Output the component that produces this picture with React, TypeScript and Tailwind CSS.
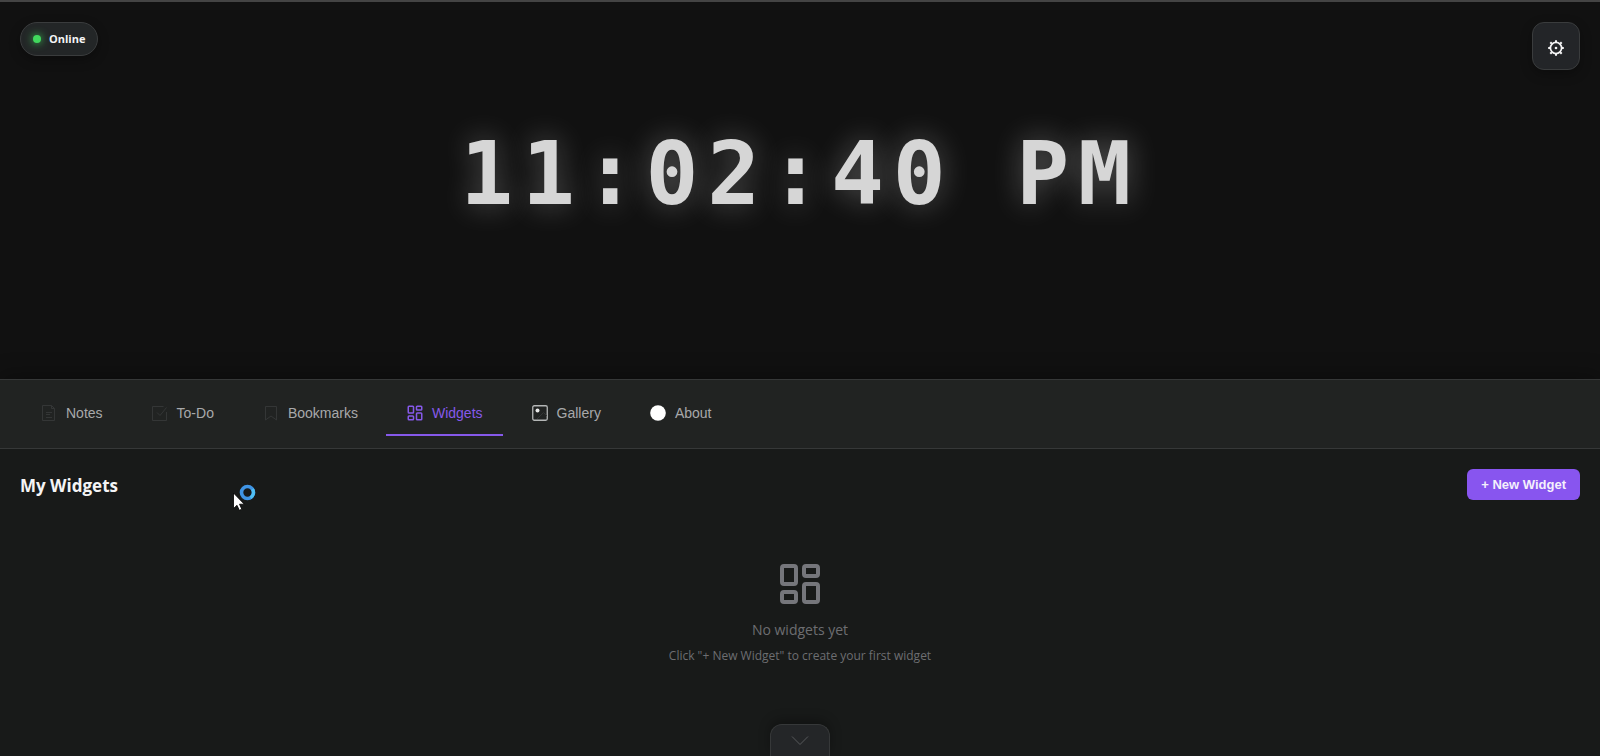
import { useState } from "react";
import type { ReactNode } from "react";
import { LayoutDashboard } from "lucide-react";

const NotesIcon = () => (
  <svg width="16" height="16" viewBox="0 0 16 16" fill="none" stroke="#343636" aria-hidden="true">
    <path d="M1.500 .5h9l3 3v12h-12zM10.500 .5v3h3M5 7.500h6M5 9.500h4M5 12.500h6" />
  </svg>
);

const TodoIcon = () => (
  <svg width="16" height="16" viewBox="0 0 16 16" fill="none" stroke="#343636" aria-hidden="true">
    <path d="M14.500 7v8.500h-14v-14h11M5 7.500l3 3 6.500-8" />
  </svg>
);

const BookmarkIcon = () => (
  <svg width="16" height="16" viewBox="0 0 16 16" fill="none" stroke="#343636" aria-hidden="true">
    <path d="M2.500 1.500h11v13.500l-5.500-4-5.500 4z" />
  </svg>
);

const GalleryIcon = () => (
  <svg width="16" height="16" viewBox="0 0 16 16" fill="none" aria-hidden="true">
    <rect x=".75" y=".75" width="14.500" height="14.500" rx="1.500" stroke="#b4b6b6" strokeWidth="1.300" />
    <circle cx="5.500" cy="5.500" r="2" fill="#e8e8e8" />
    <path d="M5 14l6.500-6.500L15 11" stroke="#343636" />
  </svg>
);

const AboutIcon = () => (
  <svg width="16" height="16" viewBox="0 0 16 16" aria-hidden="true">
    <circle cx="8" cy="8" r="7.800" fill="#fff" />
  </svg>
);

const GearIcon = () => (
  <svg width="16" height="16" viewBox="0 0 16 16" fill="none" stroke="#f4f4f5" aria-hidden="true">
    <circle cx="8" cy="8" r="5.600" strokeWidth="1.700" />
    <circle cx="8" cy="8" r="1.300" fill="#f4f4f5" stroke="none" />
    <path
      d="M8 .2v2M8 13.800v2M.2 8h2M13.800 8h2M2.300 2.300l1.500 1.500M12.200 12.200l1.500 1.500M2.300 13.700l1.500-1.500M12.200 3.800l1.500-1.500"
      strokeWidth="2"
    />
  </svg>
);

const tabs: { id: string; label: string; icon: ReactNode }[] = [
  { id: "notes", label: "Notes", icon: <NotesIcon /> },
  { id: "todo", label: "To-Do", icon: <TodoIcon /> },
  { id: "bookmarks", label: "Bookmarks", icon: <BookmarkIcon /> },
  { id: "widgets", label: "Widgets", icon: <LayoutDashboard size={18} strokeWidth={2} /> },
  { id: "gallery", label: "Gallery", icon: <GalleryIcon /> },
  { id: "about", label: "About", icon: <AboutIcon /> },
];

const BusyCursor = () => (
  <svg
    width="24"
    height="28"
    viewBox="0 0 24 28"
    className="absolute left-[232px] top-[35px] pointer-events-none"
    aria-hidden="true"
  >
    <path d="M1.500 9v15.500l3.500-3.200 2.300 5 2.500-1.100-2.300-5h4.800z" fill="#fff" stroke="#000" strokeWidth=".8" />
    <circle cx="15.500" cy="8.500" r="6" fill="none" stroke="#3f94e4" strokeWidth="3.600" />
    <path d="M20.500 5.200A6 6 0 0 1 18.500 13.700" fill="none" stroke="#4fc0f5" strokeWidth="3.200" />
  </svg>
);

const App = () => {
  const [active, setActive] = useState("widgets");

  return (
    <div className="relative flex min-h-screen flex-col overflow-hidden border-t-2 border-[#444444] bg-[#111111] font-['Open_Sans','Noto_Sans',sans-serif] text-[#f4f4f5]">
      <header className="flex h-[377px] flex-col">
        <div className="flex items-start justify-between p-5">
          <div className="flex h-[34px] items-center gap-2 rounded-full border border-[#3a3c3d] bg-[#232627] px-3 shadow-[0_4px_12px_rgba(0,0,0,0.3)]">
            <span className="size-2 rounded-full bg-[#41d95d] shadow-[0_0_8px_#41d95d]" />
            <span className="pt-px text-[11px] font-bold">Online</span>
          </div>
          <button
            type="button"
            aria-label="Settings"
            className="flex size-12 items-center justify-center rounded-xl border border-[#3a3c3d] bg-[#232528] pt-1 shadow-[0_4px_12px_rgba(0,0,0,0.3)]"
          >
            <GearIcon />
          </button>
        </div>
        <time className="mt-6 text-center font-['DejaVu_Sans_Mono',monospace] text-[88px] leading-[120px] font-bold tracking-widest whitespace-pre text-[#d6d6d6] [text-shadow:0_0_30px_rgba(255,255,255,0.3)]">
          11:02:40 PM
        </time>
      </header>

      <nav className="flex gap-2 border-y border-[#363838] bg-[#212322] px-5 py-3 font-['Liberation_Sans',Arial,sans-serif] shadow-[0_-4px_20px_rgba(0,0,0,0.3)]">
        {tabs.map((tab) => (
          <button
            key={tab.id}
            type="button"
            onClick={() => setActive(tab.id)}
            className={`flex h-11 items-center gap-2 border-b-2 px-5 text-sm ${
              active === tab.id ? "border-[#8659ea] text-[#8659ea]" : "border-transparent text-[#a8a9ab]"
            }`}
          >
            <span className="flex w-[18px] justify-center">{tab.icon}</span>
            {tab.label}
          </button>
        ))}
      </nav>

      <main className="relative flex flex-1 flex-col bg-[#181a19]">
        <div className="flex items-center justify-between px-5 pt-5">
          <h2 className="pt-0.5 text-[17px] leading-[29px] font-bold">My Widgets</h2>
          <button
            type="button"
            className="h-[31px] rounded-md bg-[#8855ef] px-3.5 font-['Liberation_Sans',Arial,sans-serif] text-[13px] font-bold text-[#f4f0fc]"
          >
            + New Widget
          </button>
        </div>

        <div className="flex flex-1 flex-col items-center pt-[60px] text-[#6d6e71]">
          <LayoutDashboard size={48} strokeWidth={2} className="text-[#75767b]" />
          <p className="mt-3 text-sm leading-5">No widgets yet</p>
          <p className="mt-2 text-xs leading-4">Click "+ New Widget" to create your first widget</p>
        </div>

        <button
          type="button"
          aria-label="Collapse panel"
          className="mx-auto flex h-8 w-[60px] justify-center rounded-t-xl border border-b-0 border-[#363839] bg-[#242628] pt-[11px] shadow-[0_-4px_12px_rgba(0,0,0,0.3)]"
        >
          <svg width="18" height="10" viewBox="0 0 18 10" fill="none" stroke="#57595b" aria-hidden="true">
            <path d="M1 .5l8 8 8-8" />
          </svg>
        </button>
        <BusyCursor />
      </main>
    </div>
  );
};

export default App;
